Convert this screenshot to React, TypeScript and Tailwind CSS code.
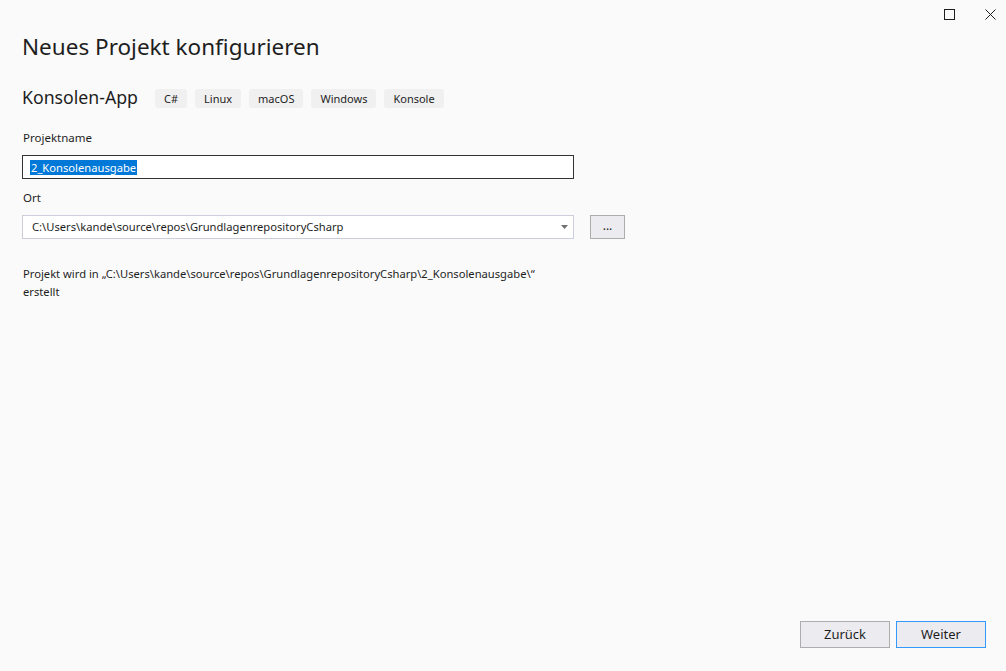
import React from "react";

const font = { fontFamily: '"Segoe UI", "Noto Sans", "Open Sans", sans-serif' };

function Tag({ children }: { children: React.ReactNode }) {
  return (
    <span className="h-[19px] px-[9px] flex items-center rounded-[3px] bg-[#f0f0f0] text-[11px] text-[#1e1e1e] leading-none">
      {children}
    </span>
  );
}

export default function App() {
  return (
    <div
      className="w-full h-[671px] bg-[#fafafa] flex flex-col text-[#1e1e1e] overflow-hidden"
      style={font}
    >
      <div className="h-[28px] flex justify-end items-center pr-[10px] gap-[30px]">
        <div className="w-[11px] h-[11px] border border-[#1e1e1e]" />
        <svg width="11" height="11" viewBox="0 0 11 11">
          <path d="M0.5 0.5 L10.5 10.5 M10.5 0.5 L0.5 10.5" stroke="#1e1e1e" strokeWidth="1" />
        </svg>
      </div>
      <div className="pl-[22px] flex flex-col flex-1">
        <h1 className="text-[22.5px] leading-[32px] mt-[3px] text-[#1e1e1e] font-normal">
          Neues Projekt konfigurieren
        </h1>
        <div className="flex items-center mt-[23px] h-[24px]">
          <span className="text-[17.7px] leading-none mr-[17px]">Konsolen-App</span>
          <div className="flex gap-[8px]">
            <Tag>C#</Tag>
            <Tag>Linux</Tag>
            <Tag>macOS</Tag>
            <Tag>Windows</Tag>
            <Tag>Konsole</Tag>
          </div>
        </div>
        <label className="text-[11.5px] leading-[16px] mt-[20px] ml-[1px]">Projektname</label>
        <div className="mt-[9px] w-[552px] h-[24px] border border-[#333337] bg-white flex items-center pl-[7px]">
          <span className="bg-[#0078d7] text-white text-[11.2px] leading-[15px] px-[1px]">
            2_Konsolenausgabe
          </span>
        </div>
        <label className="text-[11.5px] leading-[16px] mt-[11px] ml-[1px]">Ort</label>
        <div className="flex items-center mt-[9px] gap-[16px]">
          <div className="w-[552px] h-[24px] border border-[#cccedb] bg-white flex items-center justify-between pl-[9px] pr-[5px]">
            <span className="text-[11.2px] leading-none">
              C:\Users\kande\source\repos\GrundlagenrepositoryCsharp
            </span>
            <svg width="7" height="4" viewBox="0 0 7 4">
              <path d="M0 0 H7 L3.5 4 Z" fill="#717171" />
            </svg>
          </div>
          <div className="w-[35px] h-[24px] border border-[#adadad] bg-[#ebebf0] flex items-center justify-center text-[12px] leading-none pb-[2px]">
            ...
          </div>
        </div>
        <p className="text-[11.2px] leading-[18px] mt-[26px] ml-[1px]">
          Projekt wird in „C:\Users\kande\source\repos\GrundlagenrepositoryCsharp\2_Konsolenausgabe\“
          <br />
          erstellt
        </p>
        <div className="flex-1" />
        <div className="flex justify-end gap-[6px] pr-[20px] mb-[23px]">
          <button className="w-[90px] h-[27px] border border-[#adadad] bg-[#ebebf0] text-[13px] text-[#1e1e1e]">
            Zurück
          </button>
          <button className="w-[90px] h-[27px] border border-[#3399ff] bg-[#ebebf0] text-[13px] text-[#1e1e1e]">
            Weiter
          </button>
        </div>
      </div>
    </div>
  );
}
